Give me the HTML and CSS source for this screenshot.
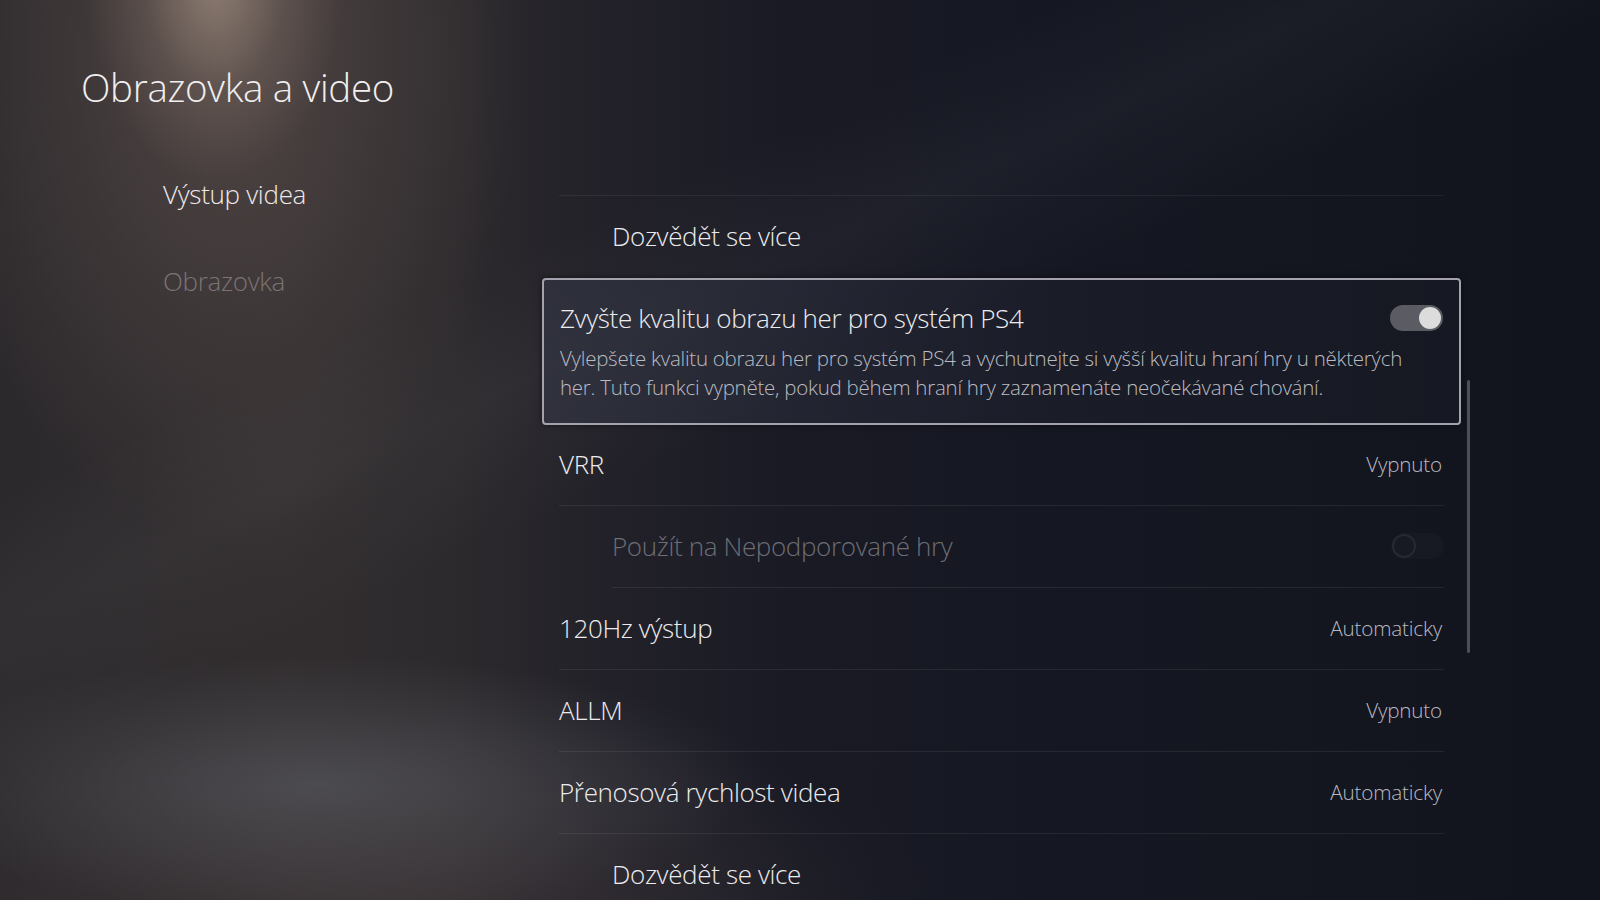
FILE: index.html
```html
<!DOCTYPE html>
<html lang="cs">
<head>
<meta charset="utf-8">
<title>Obrazovka a video</title>
<link rel="stylesheet" href="styles.css">
</head>
<body>
<div class="screen">
  <aside class="side">
    <h1 class="title">Obrazovka a video</h1>
    <nav class="nav">
      <div class="nav-item active">Výstup videa</div>
      <div class="nav-item dim">Obrazovka</div>
    </nav>
  </aside>
  <main class="panel">
    <div class="list">
      <div class="row ghost"></div>
      <div class="row sub before-focus">
        <span class="label">Dozvědět se více</span>
      </div>
      <div class="row focus">
        <div class="focus-head">
          <span class="label">Zvyšte kvalitu obrazu her pro systém PS4</span>
          <span class="toggle on"><span class="knob"></span></span>
        </div>
        <p class="desc">Vylepšete kvalitu obrazu her pro systém PS4 a vychutnejte si vyšší kvalitu hraní hry u některých her. Tuto funkci vypněte, pokud během hraní hry zaznamenáte neočekávané chování.</p>
      </div>
      <div class="row after-focus">
        <span class="label">VRR</span>
        <span class="value">Vypnuto</span>
      </div>
      <div class="row sub disabled">
        <span class="label">Použít na Nepodporované hry</span>
        <span class="toggle off"><span class="knob"></span></span>
      </div>
      <div class="row">
        <span class="label">120Hz výstup</span>
        <span class="value">Automaticky</span>
      </div>
      <div class="row">
        <span class="label">ALLM</span>
        <span class="value">Vypnuto</span>
      </div>
      <div class="row">
        <span class="label">Přenosová rychlost videa</span>
        <span class="value">Automaticky</span>
      </div>
      <div class="row sub last">
        <span class="label">Dozvědět se více</span>
      </div>
    </div>
    <div class="scroll"><div class="thumb"></div></div>
  </main>
</div>
</body>
</html>
```

FILE: styles.css
```css
* { box-sizing: border-box; }
html, body { margin: 0; padding: 0; }
body {
  width: 1600px;
  height: 900px;
  overflow: hidden;
  font-family: "Open Sans", "Noto Sans", sans-serif;
  font-weight: 300;
  color: #ececef;
  background: #13151e;
}
.screen {
  position: relative;
  width: 1600px;
  height: 900px;
  display: flex;
  overflow: hidden;
  background:
    radial-gradient(ellipse 130px 200px at 215px -20px, rgba(170,150,135,0.7), rgba(150,130,118,0.25) 55%, rgba(0,0,0,0) 100%),
    radial-gradient(ellipse 300px 480px at 225px 60px, rgba(125,105,98,0.4), rgba(0,0,0,0) 100%),
    radial-gradient(ellipse 440px 130px at 320px 785px, rgba(95,97,103,0.55), rgba(0,0,0,0) 100%),
    radial-gradient(ellipse 520px 200px at 420px 910px, rgba(75,64,66,0.45), rgba(0,0,0,0) 100%),
    linear-gradient(155deg, rgba(0,0,0,0) 30%, rgba(255,255,255,0.03) 38%, rgba(0,0,0,0) 47%),
    linear-gradient(90deg, #2c292c 0%, #312d2f 18%, #2d2a2d 28%, #222129 38%, #191a24 50%, #151722 65%, #12141d 100%);
}
.side {
  width: 542px;
  flex: none;
  padding: 62px 0 0 81px;
}
.title {
  margin: 0;
  font-size: 38.5px;
  font-weight: 300;
  line-height: 50px;
  letter-spacing: -0.3px;
  color: #f0eeee;
}
.nav {
  margin-top: 66px;
  padding-left: 82px;
  display: flex;
  flex-direction: column;
  gap: 55px;
}
.nav-item {
  font-size: 26px;
  line-height: 32px;
  letter-spacing: -0.3px;
}
.nav-item.active { color: #eeeaea; }
.nav-item.dim { color: #7b7374; }

.panel {
  flex: none;
  width: 1058px;
  display: flex;
}
.list {
  width: 919px;
  padding-top: 114px;
  display: flex;
  flex-direction: column;
}
.row {
  flex: none;
  height: 82px;
  margin: 0 17px;
  padding-bottom: 2px;
  display: flex;
  align-items: center;
  justify-content: space-between;
  border-bottom: 1px solid rgba(255,255,255,0.075);
  font-size: 26px;
  letter-spacing: -0.35px;
}
.row.sub { margin-left: 70px; }
.row.last, .row.before-focus { border-bottom-color: transparent; }
.row.after-focus { height: 81px; }
.row.ghost { border-bottom-color: rgba(255,255,255,0.06); }
.label { color: #ececef; }
.value {
  font-size: 20.7px;
  color: #b9b9c1;
  letter-spacing: -0.2px;
  padding-right: 2px;
}
.row.disabled .label { color: #6c6d75; }

.row.focus {
  height: 147px;
  margin: 0;
  padding: 17px 16px 0 16px;
  display: block;
  border: 2px solid #a4a3ad;
  border-radius: 4px;
  background: linear-gradient(90deg, rgba(52,56,72,0.55), rgba(30,33,45,0.5) 60%, rgba(25,27,38,0.5));
  box-shadow: 0 0 6px rgba(0,0,0,0.5);
}
.focus-head {
  display: flex;
  align-items: center;
  justify-content: space-between;
  height: 42px;
}
.desc {
  margin: 5px 0 0 0;
  padding-right: 40px;
  font-size: 20.5px;
  line-height: 29px;
  color: #bbbbc2;
  letter-spacing: -0.25px;
}
.toggle {
  position: relative;
  width: 53px;
  height: 26px;
  border-radius: 13px;
  flex: none;
}
.toggle.on { background: #5a5b63; }
.toggle.on .knob {
  position: absolute;
  right: 2px;
  top: 2px;
  width: 22px;
  height: 22px;
  border-radius: 50%;
  background: #dcdcdc;
}
.toggle.off { background: rgba(255,255,255,0.02); }
.toggle.off .knob {
  position: absolute;
  left: 1px;
  top: 1px;
  width: 24px;
  height: 24px;
  border-radius: 50%;
  border: 2px solid rgba(255,255,255,0.07);
}
.scroll {
  width: 3px;
  margin-left: 6px;
  padding-top: 380px;
}
.thumb {
  width: 3px;
  height: 273px;
  border-radius: 2px;
  background: #4d4e56;
}
```
